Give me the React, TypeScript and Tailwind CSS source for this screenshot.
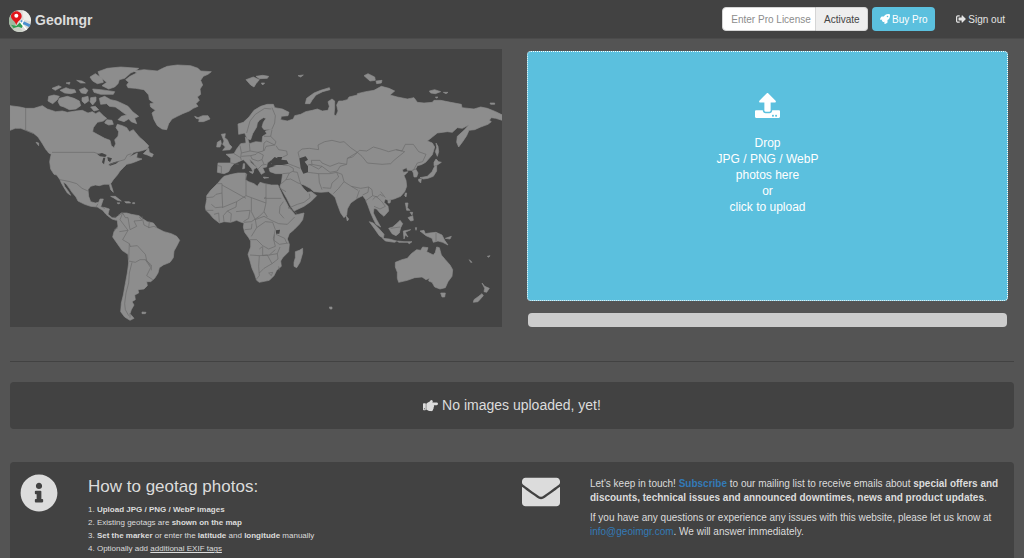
import {
  FaEnvelope,
  FaHandPointRight,
  FaInfoCircle,
  FaRocket,
  FaSignOutAlt,
  FaUpload,
} from 'react-icons/fa';

function Logo() {
  return (
    <svg viewBox="0 0 66 66" className="h-[22px] w-[22px] shrink-0" aria-hidden="true">
      <defs>
        <clipPath id="logo-clip">
          <circle cx="33" cy="33" r="33" />
        </clipPath>
      </defs>
      <g clipPath="url(#logo-clip)">
        <rect width="66" height="66" fill="#dcdcd8" />
        <path d="M0 0h20v66H0z" fill="#9fb8a0" />
        <path d="M40 0L66 0V34L44 30z" fill="#efeeea" />
        <path d="M8 62L24 44 44 66H8z" fill="#c9cfc4" />
        <path d="M36 30L66 44V54L34 38z" fill="#4a8fd0" />
        <path d="M6 44L22 48 34 36 44 42 38 54 28 50 14 54z" fill="#2f9d52" />
        <path d="M34 36L58 66M44 30L38 44" stroke="#fff" strokeWidth="4" />
        <path
          d="M22 4C12 4 6 11 6 19 6 30 19 32 22 46 25 32 38 30 38 19 38 11 32 4 22 4z"
          fill="#e0161b"
        />
        <circle cx="22" cy="17" r="6" fill="#fff" />
      </g>
    </svg>
  );
}

const northAmerica = [
  'M28 318L58 322 75 326 100 326 125 318 140 328 165 336 185 334 200 338 225 334 245 332 262 340 275 336 285 342 296 336 310 350 318 356 308 364 290 368 278 384 276 396 290 404 312 416 328 422 332 438 340 444 345 432 342 420 352 410 354 396 346 384 350 374 365 378 378 384 386 396 398 390 406 400 416 412 430 424 444 438 440 448 420 454 400 458 386 472 398 466 410 460 408 474 424 478 410 484 394 490 378 494 368 504 358 514 350 526 338 540 330 552 334 564 338 578 330 570 326 554 310 554 296 558 284 556 270 560 262 570 264 590 270 606 284 610 294 608 298 598 308 598 304 610 300 622 314 624 326 628 322 644 334 654 350 656 347 662 334 658 326 652 316 644 306 632 290 622 270 620 252 614 232 604 226 592 214 578 206 566 196 552 188 548 192 560 204 576 210 587 200 580 190 564 182 550 178 540 168 526 160 524 150 508 147 486 150 470 152 464 148 456 136 450 124 430 112 412 100 402 76 392 60 386 44 386 28 392z',
  // greenland
  'M384 248L375 240 388 230 408 220 400 214 430 210 470 214 486 206 500 200 530 196 570 198 592 206 600 214 632 216 622 224 608 230 600 242 606 256 598 268 600 284 590 292 596 302 586 312 592 320 578 326 566 334 546 342 530 350 514 358 504 372 498 390 484 388 470 378 460 360 454 340 464 332 450 322 448 312 460 310 446 300 444 286 430 270 404 266 382 264 378 256z',
  // ellesmere and devon
  'M292 216L320 206 360 202 414 206 404 214 390 220 372 236 356 240 352 252 342 262 324 268 304 258 318 248 298 232z',
  'M268 232L284 222 304 236 308 248 290 252 276 244z',
  'M276 268L300 270 342 276 338 284 300 284 280 278z',
  // baffin
  'M296 296L312 290 330 300 348 304 366 312 382 320 396 336 414 350 402 356 408 372 392 366 384 358 370 366 352 360 362 350 378 346 366 338 356 330 344 322 326 320 318 312 300 314z',
  // victoria and banks
  'M176 296L200 290 220 296 236 304 240 318 226 328 206 330 190 322 178 318 172 306z',
  'M144 290L160 286 176 290 170 300 156 312 142 304z',
  'M178 272L196 264 206 268 222 270 226 278 210 282 192 280z',
  'M154 266L174 258 182 262 164 272z',
  'M228 242L244 244 254 250 240 250z',
  'M196 250L208 248 206 254z',
  'M236 270L252 264 262 272 256 282 242 280z',
  'M244 294L262 290 264 304 252 312 244 304z',
  'M270 294L286 292 286 304 276 316 268 306z',
  'M270 322L284 320 294 330 280 334z',
  'M318 360L334 362 338 374 324 376 312 370z',
  // newfoundland, vancouver, iceland
  'M428 462L444 446 446 458 458 464 454 472 440 466z',
  'M136 448L150 458 156 466 144 460z',
  'M106 428L114 430 114 438z',
  'M582 350L592 354 606 348 622 348 628 358 608 366 594 366 596 358 586 356z',
  // cuba, hispaniola, puerto rico
  'M330 590L344 590 362 604 350 602 338 594z',
  'M372 606L386 606 390 610 376 610z',
  'M350 609L358 610 352 613z',
  'M396 609L402 609 402 612 396 612z',
];

const southAmerica = [
  'M345 115L352 108 362 100 378 100 392 104 415 108 424 116 440 126 458 130 470 146 490 156 512 162 528 170 537 182 528 200 520 214 518 234 508 248 488 256 476 264 472 280 462 296 450 306 438 306 440 318 430 328 412 330 414 340 402 346 404 360 394 366 400 376 392 390 388 402 400 416 388 422 372 412 360 396 362 370 368 346 374 312 380 280 384 250 382 224 364 212 350 192 336 172 340 156 352 140 350 124z',
  'M424 397L436 398 434 402 424 402z',
];

const africa = [
  'M692 524L712 520 734 520 738 524 734 540 744 546 760 552 770 560 778 548 792 552 812 556 832 556 838 570 848 592 856 606 864 622 876 636 884 646 910 640 906 660 896 674 880 690 866 702 860 718 866 734 864 756 846 774 840 784 842 800 828 812 820 828 806 842 776 848 768 842 762 824 754 806 748 784 742 764 750 742 750 724 744 714 732 698 728 682 730 670 722 668 708 662 690 668 670 666 656 670 638 656 628 644 616 632 614 622 618 600 618 588 630 572 640 562 652 550 662 538 670 530z',
  'M884 756L896 752 906 746 906 760 898 788 888 804 880 800 880 788 884 774z',
];

const eurasia = [
  'M-38 253L-22 248 -5 232 10 212 30 200 50 194 68 194 72 204 95 208 115 218 112 228 92 230 90 240 110 244 128 238 132 228 150 224 165 216 185 212 200 208 215 214 232 212 236 200 232 186 244 178 252 184 252 205 250 225 256 228 262 214 258 196 264 184 275 184 290 180 295 172 320 166 320 162 345 156 370 152 392 140 415 146 432 154 418 166 440 172 470 178 490 174 500 188 520 190 545 188 550 182 570 182 600 188 632 194 634 204 670 208 690 202 710 206 735 216 755 226 755 242 735 236 722 234 716 242 722 246 712 254 690 262 672 270 655 272 648 288 636 306 624 322 618 308 620 290 640 272 655 256 635 266 620 264 605 278 590 276 560 280 545 292 530 304 545 310 552 322 545 345 525 368 512 375 500 378 495 388 502 400 498 412 490 412 488 400 484 392 470 392 468 384 455 390 458 398 472 396 460 408 466 422 468 440 462 456 450 470 430 478 412 482 404 478 400 488 412 500 414 514 400 530 388 520 378 508 370 506 368 520 378 540 390 562 376 554 368 538 360 520 352 498 345 480 336 468 320 476 300 490 290 508 288 526 280 534 270 520 258 488 254 474 246 466 234 456 210 458 190 456 178 446 160 436 148 432 160 448 170 458 182 456 198 468 180 486 160 500 130 514 120 500 108 476 92 448 88 440 92 430 96 402 75 402 58 396 55 386 74 380 62 372 72 362 60 362 50 370 48 382 36 384 42 398 32 404 22 388 8 370 -4 358 0 368 18 384 10 388 8 398 2 386 -14 368 -22 360 -36 366 -50 372 -60 384 -66 396 -80 402 -100 398 -98 370 -60 370 -60 356 -74 344 -50 342 -42 328 -30 312 -14 310 -16 292 -8 300 -4 312 15 306 34 308 36 290 48 282 44 274 64 268 40 270 34 262 38 248 46 236 38 234 26 242 20 250 18 262 6 282 0 300 -10 298 -18 280 -36 284z',
  // british isles
  'M-88 284L-76 282 -78 294 -70 300 -64 314 -56 322 -62 330 -84 332 -76 322 -84 314 -80 304z',
  'M-100 308L-90 302 -88 312 -92 322 -102 322z',
  // svalbard and the arctic islands
  'M-14 120L8 112 26 120 16 132 10 142 0 136z',
  'M16 110L36 107 54 110 50 116 26 117z',
  'M32 130L42 130 36 136z',
  'M142 108L158 106 150 112z',
  'M340 108L352 102 372 112 374 122 358 124z',
  'M376 124L394 122 392 130 378 132z',
  'M164 192L168 176 190 160 210 152 236 144 238 150 216 156 196 166 184 182 178 192z',
  'M536 154L552 150 570 156 554 162 540 160z',
  'M578 158L592 158 586 162z',
  'M554 172L562 172 558 176z',
  'M718 190L732 190 732 194 720 194z',
  // sakhalin, japan
  'M556 310L562 320 564 336 560 350 554 336 558 324z',
  'M550 368L556 358 564 366 572 368 560 376 550 378z',
  'M558 378L558 394 548 410 532 416 518 418 508 414 530 410 544 396 552 380z',
  'M504 418L512 418 510 430 504 424z',
  // mediterranean islands
  'M-22 372L-18 372 -18 386 -24 388z',
  'M-4 396L8 396 6 402z',
  'M38 412L54 414 40 416z',
];

const oceania = [
  // sri lanka, taiwan, hainan
  'M286 108L294 118 290 124z',
  'M464 40L468 40 466 52 462 48z',
  'M412 62L420 62 418 70 412 70z',
  // indonesia
  'M356 126L368 130 384 146 400 164 398 176 386 168 372 148z',
  'M396 176L416 178 438 184 432 188 404 184z',
  'M414 146L426 142 440 130 448 122 456 132 450 144 446 160 436 168 424 162z',
  'M458 154L480 150 464 158 472 172 464 166 460 178z',
  'M440 184L460 186 484 186 476 192 470 188 444 188z',
  'M464 70L472 70 470 84 478 92 468 92z',
  'M472 114L486 108 488 122 480 124z',
  'M478 98L486 98 484 106z',
  'M494 144L498 144 496 152z',
  'M508 154L520 152 524 162 536 160 556 158 574 166 582 182 592 196 576 188 562 184 548 188 544 176 526 168z',
  'M584 176L602 170 598 178z',
  // australia, tasmania
  'M434 248L454 240 470 236 482 222 498 210 510 212 516 202 532 204 528 216 548 226 554 218 558 202 566 204 572 226 584 240 598 256 606 270 604 290 592 306 584 324 568 328 552 322 544 308 534 304 536 296 526 300 514 292 492 294 470 302 444 308 440 296 440 278 434 262z',
  'M570 340L584 340 582 352 574 352z',
  // new zealand
  'M694 310L702 320 716 326 708 338 700 336 702 326z',
  'M694 342L698 348 682 366 668 368 670 360 684 350z',
  'M656 240L664 248 660 248z',
  'M710 230L718 228 714 233z',
  'M236 382L244 382 244 388 238 388z',
];

const lakes = [
  'M290 464L304 460 318 466 314 472 298 470z',
  'M308 474L314 474 310 494 304 488z',
  'M320 472L334 476 328 488 322 482z',
  'M324 494L340 488 356 484 346 492 328 498z',
  'M812 482L822 472 830 476 830 472 845 472 842 480 858 482 864 492 848 496 828 496 812 500z',
  'M896 476L915 470 922 480 912 486 922 500 922 518 908 522 900 506 898 490z',
  'M826 692L838 690 836 702 826 702z',
];

// country borders, grouped like the land shapes
const borders = [
  'M75 326V392M75 392L100 402M154 458H280L298 464M324 496L350 486 372 480 380 466 392 462M178 540L208 546 228 552 244 566 262 574M286 622L292 612M306 622L312 628M334 654L344 652',
  'M352 648L366 640 358 660 382 692 366 720 386 732 390 742 M366 640L374 654 382 654 388 690M352 684L340 690M382 692L356 696M388 690L408 680 400 664 424 662 416 652M424 650L430 676 446 684M446 666L444 684 460 680 468 684M390 740L410 738 434 764 438 782 450 800 M386 732L384 780M384 784L404 788 418 780 434 780 450 804 438 828 456 840M434 780L452 796 452 812M394 788L386 820 384 850 376 880 372 912 374 930 384 948M388 940V954',
  'M648 552L664 552 664 580 646 584 638 592 616 594M664 556L736 596M736 522V560L736 588 708 606 664 624M664 580L666 622 644 624 632 614M736 588L752 594 796 610M796 552V592L790 596H842M796 592V610L790 636 776 650 752 666 730 668M708 606L706 622 680 634 668 648 670 666M706 636L724 634 748 632 744 656 728 666M680 634L692 642 690 666M640 644L654 640 656 668M616 632L638 632M752 594L752 636 764 660 790 650 812 662 834 672 860 674 882 652M790 636L800 652M848 606L838 620 836 640 850 656 M862 622L890 642M764 660L768 684 752 710 M732 690L752 688 754 672M768 684L794 666 816 668 824 690 818 716 824 740 804 748 786 738 768 720 748 720M826 704L852 716 858 730M822 704L820 722 836 734 864 730M748 766L776 768 800 766M776 748L786 740M776 768L774 800 776 828 766 840M786 742V768L806 766 824 750M800 766L814 792 790 806 776 820M806 766L830 762 838 742M830 762L832 778 814 792M834 800L836 812M804 820L816 818 812 828z',
  'M-60 370L-36 374M-98 378L-88 380 -88 400M-50 342L-30 354 -28 362M-32 318L-28 338 -30 354M-4 312L-2 334 -28 340M-2 334L22 338 38 334 40 310M-28 350L0 348 16 344 22 338M0 348L4 358 22 364 34 360 38 346 22 338M22 388L34 376 48 374M34 360L40 374M40 310L48 304 72 316 76 306 60 290 40 290M60 290L64 270M72 316L46 320 40 334M76 318L84 330 108 334 110 346 96 352M-12 280L-2 244 14 224 42 206 62 208M64 204L74 228 72 250 64 268M146 354L142 338 154 328 176 326 204 330 202 316 222 306 244 302 268 308 280 306 300 324 320 338 306 352 290 356 288 374 264 370 238 380 214 370 208 362 182 362 184 374 172 376M320 338L326 332 348 334 368 322 390 328 414 336 436 330 462 336 442 352 430 362 420 372 394 374 350 370 334 350zM436 330L454 334 464 314 488 314 504 336 526 344 516 366 500 370 488 392M290 356L320 338M184 374L214 380 238 398 260 394 268 380 288 374M214 380L204 388 176 374M112 372L128 378 148 386M96 376L114 378 128 386 128 396 140 398M96 402L116 400 128 394M116 400L106 420 92 432M106 420L120 418 142 430 150 432M140 398L146 420 150 432M172 398L204 402 206 428 214 450M204 402L238 402 258 398 264 412 244 430 240 446 216 444M258 398L274 404 280 426 264 446 248 462M280 426L302 440 330 446 354 442 352 458 336 466M302 440L322 452M326 452L318 476M354 442L364 450 366 468 344 484M366 468L380 472 388 464 398 470M366 480L376 470 392 484 404 500 388 508 370 500M390 456L404 474M112 506L140 494 160 488M176 462L178 474 160 488M88 446L106 456M484 392L496 388M376 140',
  'M556 160V184M420 146L448 142',
];

function WorldMap() {
  return (
    <svg
      viewBox="28 148 1476 834"
      className="block w-full bg-[#444444]"
      role="img"
      aria-label="World map"
    >
      <g fill="#8d8d8d" stroke="#8d8d8d" strokeWidth="2" strokeLinejoin="round">
        {northAmerica.map((d) => <path key={d} d={d} />)}
        {africa.map((d) => <path key={d} d={d} />)}
        <g transform="translate(0 540)">
          {southAmerica.map((d) => <path key={d} d={d} />)}
        </g>
        <g transform="translate(750 120)">
          {eurasia.map((d) => <path key={d} d={d} />)}
        </g>
        <g transform="translate(750 540)">
          {oceania.map((d) => <path key={d} d={d} />)}
        </g>
      </g>
      <g fill="#444444">
        {lakes.map((d) => <path key={d} d={d} />)}
      </g>
      <g fill="none" stroke="#696969" strokeWidth="2" strokeLinejoin="round">
        <path d={borders[0]} />
        <path d={borders[1]} />
        <path d={borders[2]} />
        <path d={borders[3]} transform="translate(750 120)" />
        <path d={borders[4]} transform="translate(750 540)" />
      </g>
    </svg>
  );
}

function Header() {
  return (
    <header className="flex h-[39px] items-center justify-between border-b border-[#4b4b4b] bg-[#424242] pr-[19px] pl-[9px]">
      <a href="#" className="flex items-center gap-1 pt-[3px] text-[14px] font-bold text-[#dcdcdc]">
        <Logo />
        GeoImgr
      </a>
      <div className="flex items-center text-[10px]">
        <form className="flex h-6">
          <input
            type="text"
            aria-label="Pro License"
            placeholder="Enter Pro License"
            className="w-[94px] rounded-l border border-[#d5d5d5] bg-white pl-2 text-[#555555] outline-none placeholder:text-[#8c8c8c]"
          />
          <button
            type="button"
            className="w-[52px] rounded-r border border-l-0 border-[#d5d5d5] bg-[#eeeeee] text-[#444444]"
          >
            Activate
          </button>
        </form>
        <button
          type="button"
          className="ml-1 flex h-6 w-[63px] items-center justify-center gap-[2px] rounded bg-[#5bc0de] text-white"
        >
          <FaRocket className="h-[10px] w-[10px]" />
          Buy Pro
        </button>
        <a href="#" className="ml-[21px] flex items-center gap-[2px] text-[#e4e4e4]">
          <FaSignOutAlt className="h-[10px] w-[10px]" />
          Sign out
        </a>
      </div>
    </header>
  );
}

const steps = [
  <strong>Upload JPG / PNG / WebP images</strong>,
  <>Existing geotags are <strong>shown on the map</strong></>,
  <>
    <strong>Set the marker</strong> or enter the <strong>latitude</strong> and{' '}
    <strong>longitude</strong> manually
  </>,
  <>Optionally add <a href="#" className="underline">additional EXIF tags</a></>,
];

export default function App() {
  return (
    <div className="flex min-h-screen flex-col bg-[#545454] font-['Liberation_Sans',Arial,sans-serif] text-[#dcdcdc]">
      <Header />
      <main className="flex flex-1 flex-col px-[10px] pt-[10px]">
        <section className="flex gap-[25px] pr-[6px]">
          <div className="flex-[492_1_0]">
            <WorldMap />
          </div>
          <div className="flex flex-[481_1_0] flex-col pt-[2px]">
            <button
              type="button"
              className="flex flex-1 flex-col items-center rounded border border-dotted border-white bg-[#5bc0de] pt-[41px] text-[12px] leading-[16px] text-white"
            >
              <FaUpload className="mb-[17px] h-[25px] w-[25px]" />
              <span>Drop</span>
              <span>JPG / PNG / WebP</span>
              <span>photos here</span>
              <span>or</span>
              <span>click to upload</span>
            </button>
            <div
              role="progressbar"
              aria-label="Upload"
              className="mx-px mt-3 h-[14px] rounded-sm bg-[#cccccc]"
            />
          </div>
        </section>

        <hr className="mt-[34px] border-[#424242]" />

        <div className="mt-5 flex h-[47px] items-center justify-center gap-1 rounded-sm bg-[#424242] text-[14px]">
          <FaHandPointRight className="h-[15px] w-[15px]" />
          No images uploaded, yet!
        </div>

        <section className="mt-[33px] grid flex-1 grid-cols-2 rounded-t-sm bg-[#424242]">
          <div className="flex pl-[10px]">
            <FaInfoCircle className="mt-3 h-[38px] w-[38px] shrink-0" />
            <div className="pt-[13px] pl-[30px]">
              <h2 className="text-[17px] leading-[24px]">How to geotag photos:</h2>
              <ol className="mt-1 list-inside list-decimal text-[8px] leading-[13px]">
                {steps.map((step, i) => (
                  <li key={i}>{step}</li>
                ))}
              </ol>
            </div>
          </div>
          <div className="flex pr-2 pl-[10px]">
            <FaEnvelope className="mt-[11px] h-[38px] w-[38px] shrink-0" />
            <div className="space-y-[6px] pt-[15px] pl-[30px] text-[10px] leading-[14px]">
              <p>
                Let's keep in touch! <a href="#" className="font-bold text-[#337ab7]">Subscribe</a> to
                our mailing list to receive emails about{' '}
                <strong>
                  special offers and discounts, technical issues and announced downtimes, news and
                  product updates
                </strong>
                .
              </p>
              <p>
                If you have any questions or experience any issues with this website, please let us
                know at <a href="#" className="text-[#337ab7]">info@geoimgr.com</a>. We will answer
                immediately.
              </p>
            </div>
          </div>
        </section>
      </main>
    </div>
  );
}
